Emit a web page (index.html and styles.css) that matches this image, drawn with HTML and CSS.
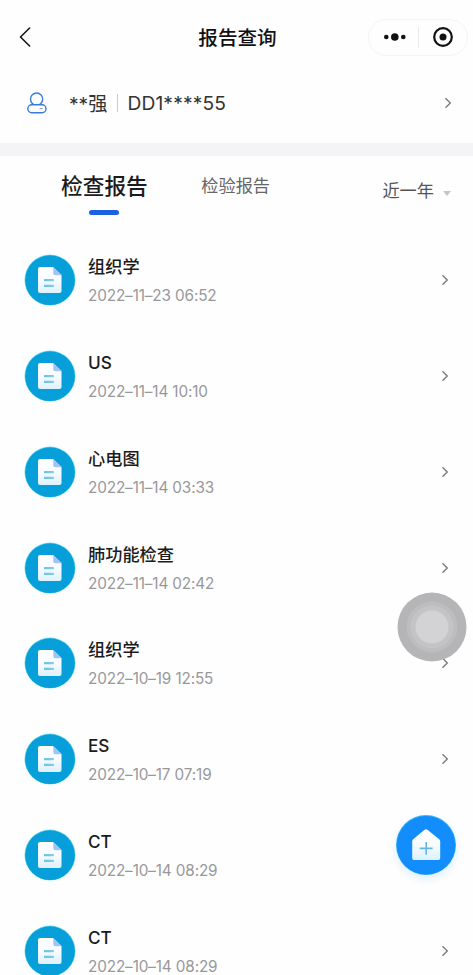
FILE: index.html
```html
<!DOCTYPE html>
<html lang="zh-CN">
<head>
<meta charset="utf-8">
<title>报告查询</title>
<link rel="stylesheet" href="styles.css">
</head>
<body>
<svg width="0" height="0" class="defs" aria-hidden="true">
  <defs>
    <linearGradient id="paper" x1="0" y1="0" x2="0" y2="1"><stop offset="0" stop-color="#fff"/><stop offset=".5" stop-color="#f7fcff"/><stop offset="1" stop-color="#dcf1fd"/></linearGradient>
    <linearGradient id="line" x1="0" y1="0" x2="1" y2="0"><stop offset="0" stop-color="#67c3df"/><stop offset="1" stop-color="#8bcdea"/></linearGradient>
    <symbol id="doc" viewBox="0 0 52 52">
      <circle cx="26" cy="26" r="25.500" fill="#73e0f3"/>
      <circle cx="26" cy="26.200" r="24.900" fill="#069fd9"/>
      <path d="M16 13h13l8.500 8v16a2 2 0 0 1-2 2H16a2 2 0 0 1-2-2V15a2 2 0 0 1 2-2z" fill="url(#paper)"/>
      <path d="M29.300 13l8.400 8.300h-6.400a2 2 0 0 1-2-2z" fill="#a3c4f1"/>
      <rect x="20" y="25" width="10" height="2.200" rx=".6" fill="url(#line)"/>
      <rect x="20" y="30.800" width="10" height="2.200" rx=".6" fill="url(#line)"/>
    </symbol>
    <symbol id="chev" viewBox="0 0 8 12"><path d="M1.500 1.300L6.300 6 1.500 10.700" fill="none" stroke="#777" stroke-width="1.300"/></symbol>
  </defs>
</svg>
<div class="app">
  <header class="nav">
    <svg class="back" viewBox="0 0 12 20"><path d="M10.600 1L1.500 10l9.100 9" fill="none" stroke="#161616" stroke-width="1.600" stroke-linecap="round" stroke-linejoin="round"/></svg>
    <h1>报告查询</h1>
    <div class="capsule">
      <svg class="dots" viewBox="0 0 22 8"><circle cx="2.300" cy="4" r="2.300"/><circle cx="10.800" cy="4" r="3.800"/><circle cx="19.300" cy="4" r="2.300"/></svg>
      <i></i>
      <svg class="target" viewBox="0 0 20 20"><circle cx="10" cy="10" r="8.800" fill="none" stroke="#111" stroke-width="2.200"/><circle cx="10" cy="10" r="3.500"/></svg>
    </div>
  </header>
  <section class="patient">
    <svg class="person" viewBox="0 0 20 22"><g fill="none" stroke="#387bdc" stroke-width="1.400"><circle cx="9.600" cy="7.100" r="6.100"/><rect x=".8" y="12.800" width="18.200" height="7.900" rx="3.950" fill="#fefefe"/></g><path d="M12.500 16.600h3.300" stroke="#9aa9ba" stroke-width="1.200"/></svg>
    <span class="name">**强</span><i class="bar"></i><span class="code">DD1****55</span>
    <svg class="chev"><use href="#chev"/></svg>
  </section>
  <nav class="tabs">
    <div class="tab active">检查报告</div>
    <div class="tab">检验报告</div>
    <div class="filter">近一年<b></b></div>
  </nav>
  <main class="list">
    <article><svg class="doc"><use href="#doc"/></svg><div class="info"><h2>组织学</h2><time>2022–11–23 06:52</time></div><svg class="chev"><use href="#chev"/></svg></article>
    <article><svg class="doc"><use href="#doc"/></svg><div class="info"><h2>US</h2><time>2022–11–14 10:10</time></div><svg class="chev"><use href="#chev"/></svg></article>
    <article><svg class="doc"><use href="#doc"/></svg><div class="info"><h2>心电图</h2><time>2022–11–14 03:33</time></div><svg class="chev"><use href="#chev"/></svg></article>
    <article><svg class="doc"><use href="#doc"/></svg><div class="info"><h2>肺功能检查</h2><time>2022–11–14 02:42</time></div><svg class="chev"><use href="#chev"/></svg></article>
    <article><svg class="doc"><use href="#doc"/></svg><div class="info"><h2>组织学</h2><time>2022–10–19 12:55</time></div><svg class="chev"><use href="#chev"/></svg></article>
    <article><svg class="doc"><use href="#doc"/></svg><div class="info"><h2>ES</h2><time>2022–10–17 07:19</time></div><svg class="chev"><use href="#chev"/></svg></article>
    <article><svg class="doc"><use href="#doc"/></svg><div class="info"><h2>CT</h2><time>2022–10–14 08:29</time></div><svg class="chev"><use href="#chev"/></svg></article>
    <article><svg class="doc"><use href="#doc"/></svg><div class="info"><h2>CT</h2><time>2022–10–14 08:29</time></div><svg class="chev"><use href="#chev"/></svg></article>
  </main>
  <svg class="assist" viewBox="0 0 70 70"><circle cx="35" cy="35" r="34.500" fill="#b5b4b6"/><circle cx="35" cy="35" r="25.500" fill="#bdbcbe"/><circle cx="35" cy="35" r="21.500" fill="#c4c3c5"/><circle cx="35" cy="35" r="16.500" fill="#d3d2d4"/></svg>
  <div class="home"><svg viewBox="0 0 60 60"><circle cx="30" cy="30" r="30" fill="#3bb8f7"/><circle cx="30" cy="30.300" r="29.300" fill="#128dfb"/><path d="M28.300 15q1.700-1.300 3.400 0l11.500 9.200q1 .8 1 2.200v16.800q0 1.800-1.800 1.800H18q-1.800 0-1.800-1.800V26.400q0-1.400 1-2.200z" fill="url(#paper)"/><path d="M30.200 27v12.800M23.800 33.400h12.800" stroke="#65b8e5" stroke-width="1.600"/></svg></div>
</div>
</body>
</html>
```
FILE: styles.css
```css
* { box-sizing: border-box; }
body { margin: 0; background: #fefefe; font-family: Inter, "Noto Sans CJK SC", sans-serif; color: #1b1b1d; }
h1, h2 { margin: 0; }
svg { display: block; flex: none; }
.defs { position: absolute; }
.app { position: relative; width: 473px; height: 975px; overflow: hidden; display: flex; flex-direction: column; }
.nav { height: 74px; flex: none; display: grid; grid-template-columns: 1fr auto 1fr; align-items: center; padding: 0 5px 0 19px; }
.back { width: 12px; height: 20px; }
.nav h1 { font-size: 19.600px; line-height: 28px; font-weight: 500; color: #111; margin: 1px 12px 0 0; }
.capsule { justify-self: end; width: 100px; height: 37px; border: 1px solid #f4f4f4; border-radius: 19px; display: flex; align-items: center; padding-left: 15px; }
.dots { width: 22px; height: 8px; fill: #111; }
.capsule i { width: 1px; height: 21px; background: #e9e9e9; margin: 0 14px 0 12px; }
.target { width: 20px; height: 20px; fill: #111; }
.patient { height: 82px; flex: none; border-bottom: 13px solid #f4f3f6; display: flex; align-items: center; padding: 2px 21px 13px 27px; font-size: 19.200px; color: #333; }
.person { width: 20px; height: 22px; }
.name { margin-left: 22px; }
.bar { width: 1px; height: 18px; background: #ccc; margin: 0 9px 0 10px; }
.code { letter-spacing: .15px; }
.chev { width: 8px; height: 12px; margin-left: auto; }
.tabs { height: 76px; flex: none; display: flex; align-items: flex-start; padding-left: 61px; }
.tab { font-size: 17.200px; line-height: 26px; margin: 17px 0 0 53.500px; color: #666; }
.tab.active { font-size: 21.700px; line-height: 32px; margin: 14px 0 0; font-weight: 500; color: #1b1b1d; }
.active::after { content: ""; display: block; width: 30px; height: 5px; border-radius: 3px; background: #1c61e0; margin: 8px auto 0; }
.filter { display: flex; align-items: center; margin: 22px 22px 0 auto; font-size: 17.200px; line-height: 26px; color: #555; }
.filter b { border: 4.500px solid transparent; border-top: 5px solid #c5c5c5; border-bottom: 0; margin: 4px 0 0 9px; }
.list { display: flex; flex-direction: column; }
.list article { height: 95.860px; flex: none; display: flex; align-items: center; padding: 0 24px; }
.doc { width: 52px; height: 52px; }
.info { margin: 1px 0 0 12px; display: flex; flex-direction: column; }
.info h2 { font-size: 17.200px; line-height: 26px; font-weight: 500; }
.info time { font-size: 15.300px; letter-spacing: -.13px; line-height: 22px; margin-top: 5px; color: #98989b; }
.assist { position: absolute; left: 396.500px; top: 591.500px; width: 70px; height: 70px; }
.home { position: absolute; left: 396px; top: 815px; width: 60px; height: 60px; border-radius: 50%; box-shadow: 0 4px 8px #168efb22; }
```
